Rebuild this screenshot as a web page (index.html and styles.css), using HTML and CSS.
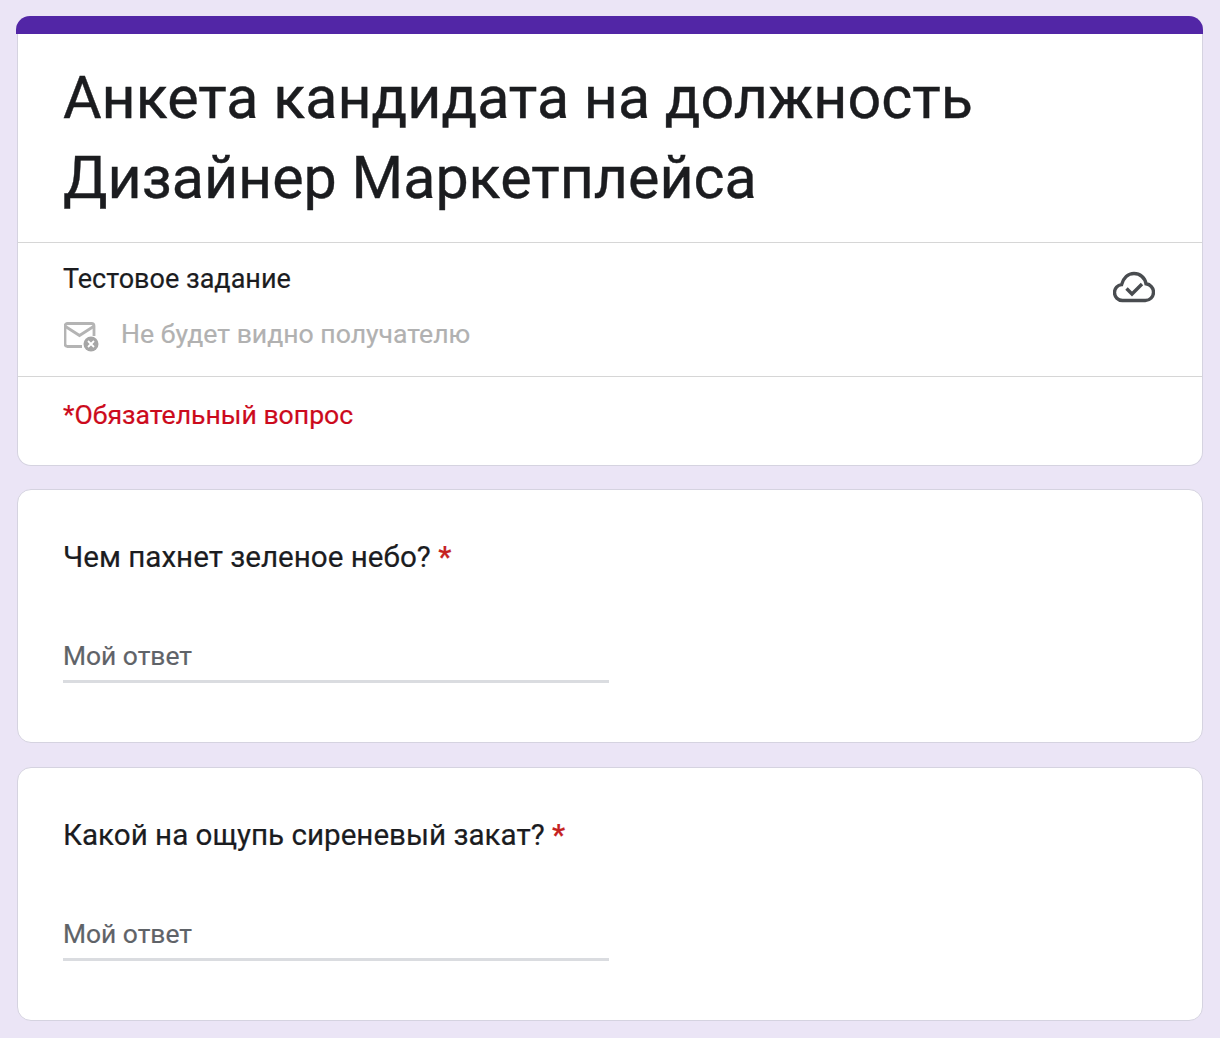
FILE: index.html
```html
<!DOCTYPE html>
<html lang="ru">
<head>
    <meta charset="UTF-8">
    <title>Анкета кандидата</title>
    <link rel="stylesheet" href="styles.css">
</head>
<body>
    <section class="card header-card">
        <div class="top-bar"></div>
        <div class="title-block">
            <h1>Анкета кандидата на должность Дизайнер Маркетплейса</h1>
        </div>
        <div class="info-block">
            <div class="info-text">
                <p class="subtitle">Тестовое задание</p>
                <div class="hidden-email">
                    <svg class="mail-icon" width="35" height="30" viewBox="0 0 35 30" fill="none">
                        <path d="M18 24.5H3.5A2.5 2.5 0 0 1 1 22V4A2.5 2.5 0 0 1 3.5 1.5h24A2.5 2.5 0 0 1 30 4V14" stroke="#b4b4b4" stroke-width="2.8"/>
                        <path d="M1.5 4.5l14 9L29.5 4.5" stroke="#b4b4b4" stroke-width="2.8"/>
                        <circle cx="27" cy="22" r="7.5" fill="#a6a6a6"/>
                        <path d="M24 19l6 6M30 19l-6 6" stroke="#fff" stroke-width="1.8"/>
                    </svg>
                    <span>Не будет видно получателю</span>
                </div>
            </div>
            <svg class="cloud-icon" width="42" height="32" viewBox="0 0 42 32" fill="none">
                <path d="M11 29.5H9.5C5 29.5 1.5 26 1.5 21.5C1.5 17.3 4.6 14 8.6 13.6C10.4 7 15 2.5 21 2.5C27 2.5 32 6.8 33 12.8C37.3 13.4 40.5 17 40.5 21.2C40.5 26 36.8 29.5 32.3 29.5Z" stroke="#494c50" stroke-width="3.4"/>
                <path d="M13.5 17.5l5.5 5.5L29 13" stroke="#494c50" stroke-width="3.4"/>
            </svg>
        </div>
        <div class="required-note">*Обязательный вопрос</div>
    </section>

    <section class="card question-card">
        <div class="question">Чем пахнет зеленое небо? <span class="star">*</span></div>
        <div class="answer">Мой ответ</div>
    </section>

    <section class="card question-card">
        <div class="question">Какой на ощупь сиреневый закат? <span class="star">*</span></div>
        <div class="answer">Мой ответ</div>
    </section>
</body>
</html>
```

FILE: styles.css
```css
body {
    margin: 0;
    padding: 16px 17px;
    background-color: #ebe5f6;
    font-family: Roboto, "Liberation Sans", sans-serif;
    color: #1b1c1f;
    -webkit-text-stroke: 0.2px;
    display: flex;
    flex-direction: column;
    gap: 24px;
    overflow: hidden;
}
.card {
    background-color: #fff;
    border: 1px solid #d5d3e0;
    border-radius: 14px;
}
.header-card {
    border-top: none;
    height: 450px;
    margin-bottom: -1px;
    box-sizing: border-box;
}
.top-bar {
    height: 18px;
    margin: 0 -1px 0 -2px;
    background-color: #5226a6;
    border-radius: 14px 14px 0 0;
}
.title-block {
    height: 209px;
    box-sizing: border-box;
    padding: 24px 45px 0;
    border-bottom: 1.5px solid #d6d6d6;
}
h1 {
    margin: 0;
    font-size: 59.2px;
    font-weight: 400;
    line-height: 80px;
    -webkit-text-stroke: 0.4px;
}
.info-block {
    display: flex;
    justify-content: space-between;
    height: 134px;
    box-sizing: border-box;
    padding: 20px 47px 0 45px;
    border-bottom: 1.5px solid #d6d6d6;
}
.subtitle {
    margin: 0;
    font-size: 27px;
    line-height: 32px;
}
.hidden-email {
    display: flex;
    align-items: flex-start;
    gap: 22px;
    margin-top: 23px;
    margin-left: 1px;
    font-size: 26.6px;
    line-height: 32px;
    color: #b1b1b1;
}
.mail-icon {
    flex: none;
    margin-top: 4px;
}
.cloud-icon {
    margin-top: 8px;
}
.required-note {
    padding: 22px 45px 0;
    font-size: 26.6px;
    line-height: 32px;
    color: #cc0a1c;
}
.question-card {
    height: 254px;
    box-sizing: border-box;
    padding: 50px 45px 0;
}
.question {
    font-size: 29.6px;
    line-height: 34px;
}
.star {
    color: #c5221f;
    font-weight: 500;
}
.answer {
    width: 546px;
    margin-top: 65px;
    padding-bottom: 7px;
    font-size: 26.4px;
    line-height: 34px;
    color: #5f6368;
    border-bottom: 3px solid #dadce0;
}
```
